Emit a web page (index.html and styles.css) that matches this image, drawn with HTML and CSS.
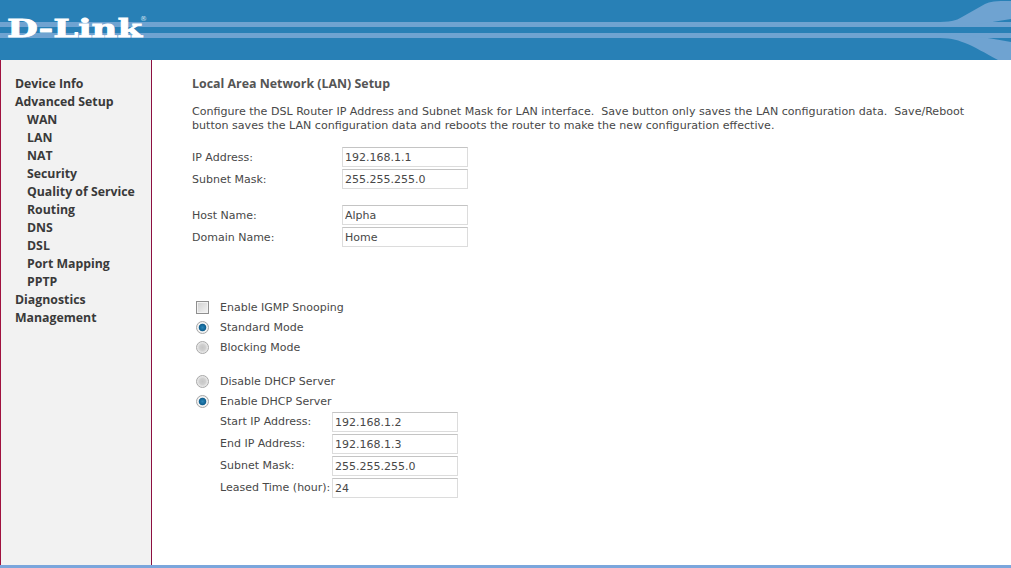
FILE: index.html
```html
<!DOCTYPE html>
<html lang="en">
<head>
<meta charset="utf-8">
<title>D-Link Local Area Network (LAN) Setup</title>
<link rel="stylesheet" href="styles.css">
</head>
<body>
<div class="page">
  <header class="banner">
    <svg class="swoosh" viewBox="0 0 1011 60" preserveAspectRatio="none" aria-hidden="true">
      <rect x="0" y="22" width="1011" height="5" fill="#6fa3d1"/>
      <rect x="0" y="33" width="1011" height="5" fill="#6fa3d1"/>
      <path d="M935 22 C950 22 956 21 962 17 L985 4 C990 1.5 995 1 1011 1 L1011 19 C985 23 965 27 935 27 Z" fill="#6fa3d1"/>
      <path d="M935 33 C955 33 985 37 1011 42 L1011 60 L998 60 C985 53 975 47 965 43 C955 39 950 38 935 38 Z" fill="#6fa3d1"/>
    </svg>
    <div class="logo">D-Link</div>
    <span class="reg">®</span>
  </header>
  <div class="columns">
    <nav class="menu">
      <a class="top">Device Info</a>
      <a class="top">Advanced Setup</a>
      <a class="sub">WAN</a>
      <a class="sub">LAN</a>
      <a class="sub">NAT</a>
      <a class="sub">Security</a>
      <a class="sub">Quality of Service</a>
      <a class="sub">Routing</a>
      <a class="sub">DNS</a>
      <a class="sub">DSL</a>
      <a class="sub">Port Mapping</a>
      <a class="sub">PPTP</a>
      <a class="top">Diagnostics</a>
      <a class="top">Management</a>
    </nav>
    <main class="content">
      <h1 class="title">Local Area Network (LAN) Setup</h1>
      <p class="intro">Configure the DSL Router IP Address and Subnet Mask for LAN interface.&nbsp; Save button only saves the LAN configuration data.&nbsp; Save/Reboot<br>button saves the LAN configuration data and reboots the router to make the new configuration effective.</p>

      <div class="fields first">
        <label class="lbl">IP Address:</label><input class="box" value="192.168.1.1">
        <label class="lbl">Subnet Mask:</label><input class="box" value="255.255.255.0">
      </div>
      <div class="fields second">
        <label class="lbl">Host Name:</label><input class="box" value="Alpha">
        <label class="lbl">Domain Name:</label><input class="box" value="Home">
      </div>

      <div class="options igmp">
        <label class="opt"><span class="mark check"></span>Enable IGMP Snooping</label>
        <label class="opt"><span class="mark radio on"></span>Standard Mode</label>
        <label class="opt"><span class="mark radio"></span>Blocking Mode</label>
      </div>
      <div class="options dhcp">
        <label class="opt"><span class="mark radio"></span>Disable DHCP Server</label>
        <label class="opt"><span class="mark radio on"></span>Enable DHCP Server</label>
      </div>
      <div class="fields dhcpf">
        <label class="lbl">Start IP Address:</label><input class="box" value="192.168.1.2">
        <label class="lbl">End IP Address:</label><input class="box" value="192.168.1.3">
        <label class="lbl">Subnet Mask:</label><input class="box" value="255.255.255.0">
        <label class="lbl">Leased Time (hour):</label><input class="box" value="24">
      </div>
    </main>
  </div>
  <div class="footer"></div>
</div>
</body>
</html>
```
FILE: styles.css
```css
* { box-sizing: border-box; }
html, body { margin: 0; height: 100%; background: #fff; overflow: hidden; }
body { font-family: "DejaVu Sans", Verdana, sans-serif; font-size: 11px; color: #484848; }
.page { height: 568px; display: flex; flex-direction: column; }

.banner { height: 60px; flex: none; background: #2880b6; position: relative; overflow: hidden; }
.swoosh { position: absolute; inset: 0; width: 100%; height: 100%; }
.logo {
  position: absolute; left: 7px; top: 14px;
  font-family: "DejaVu Serif", serif; font-weight: 700; font-size: 25px; line-height: 30px;
  color: #fff; -webkit-text-stroke: 0.8px #fff;
  transform: scaleX(1.42); transform-origin: left center; white-space: nowrap;
}
.reg { position: absolute; left: 140px; top: 15px; font-size: 7px; line-height: 8px; color: #d5e4f0; }

.columns { flex: 1; display: flex; min-height: 0; }
.menu {
  width: 152px; flex: none; background: #f2f2f2;
  border-left: 1px solid #a0123f; border-right: 1px solid #8c1040;
  padding-top: 15px; display: flex; flex-direction: column;
}
.menu a { display: block; height: 18px; line-height: 18px; font-weight: 700; font-size: 12.3px; color: #3a3a3a; font-family: "Open Sans", sans-serif; white-space: nowrap; }
.top { padding-left: 14px; }
.sub { padding-left: 26px; }

.content { flex: 1; padding: 16px 0 0 40px; min-width: 0; }
.title { margin: 0; font-size: 12.4px; line-height: 16px; font-weight: 700; font-family: "Open Sans", sans-serif; color: #555; }
.intro { margin: 13px 0 0; line-height: 14px; font-size: 11.08px; white-space: nowrap; }

.fields { display: grid; row-gap: 2px; align-items: center; }
.first { grid-template-columns: 150px 126px; margin-top: 14px; }
.second { grid-template-columns: 150px 126px; margin-top: 16px; }
.first .lbl, .second .lbl { height: 20px; line-height: 22px; }
.dhcpf { grid-template-columns: 112px 126px; margin: 0 0 0 28px; padding-top: 1px; }
.lbl { line-height: 20px; white-space: nowrap; }
.box {
  height: 20px; width: 126px; padding: 0 2px; margin: 0;
  border: 1px solid #dcdcdc; border-top-color: #c4c4c4; background: #fff;
  font: 11px "DejaVu Sans", Verdana, sans-serif; color: #484848; border-radius: 0; outline: 0;
}

.options { display: flex; flex-direction: column; }
.igmp { margin-top: 50px; }
.dhcp { margin-top: 14px; }
.opt { height: 20px; display: flex; align-items: center; white-space: nowrap; }
.mark { width: 13px; height: 13px; margin: 0 11px 0 4px; flex: none; background: linear-gradient(135deg, #d0d0d0, #f4f4f4); border: 1px solid #9a9a9a; }
.check { border-color: #8f8f8f; box-shadow: inset 0 0 0 1px #f2f2f2; }
.radio { border-radius: 50%; border-color: #a8a8a8; background: radial-gradient(circle, #c6c6c6 0, #cfcfcf 3px, #ececec 5.5px); }
.radio.on { background: radial-gradient(circle, #2a86b8 0, #0f5f8f 3.4px, #f4f4f4 4.2px, #e6e6e6 100%); }

.footer { height: 3px; flex: none; background: #7ba6dc; }
```
